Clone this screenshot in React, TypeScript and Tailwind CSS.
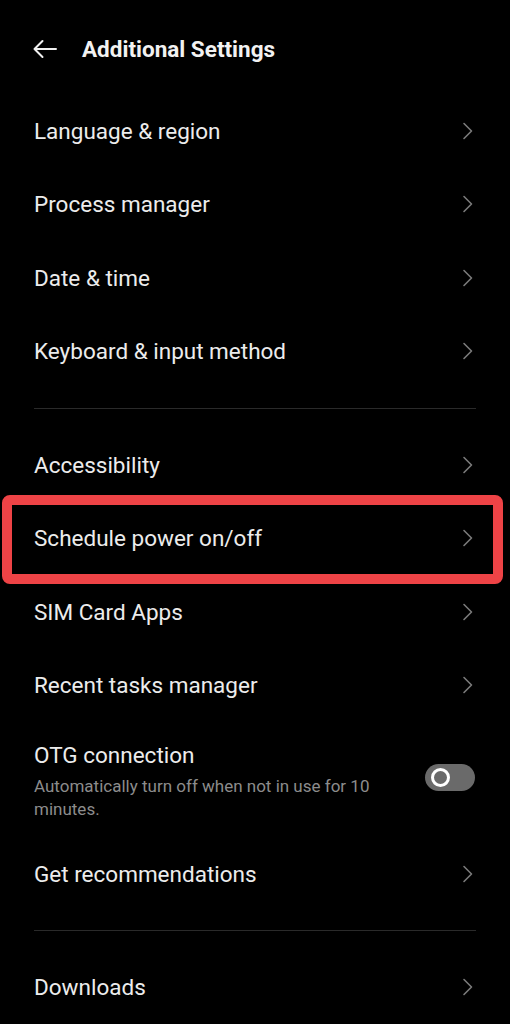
import React from "react";

const Chevron = () => (
  <svg width="14" height="18" viewBox="0 0 14 18" fill="none" className="shrink-0">
    <path d="M3 1.5 L10.5 9 L3 16.5" stroke="#7a7a7a" strokeWidth="1.6" strokeLinecap="round" strokeLinejoin="round" />
  </svg>
);

const Row = ({ label }: { label: string }) => (
  <div className="h-[73.5px] flex items-center justify-between pl-[34px] pr-[35px]">
    <span className="text-[22.5px] leading-[28px] text-[#ececec]">{label}</span>
    <Chevron />
  </div>
);

const Divider = ({ pad }: { pad: string }) => (
  <div className={`px-[34px] ${pad}`}>
    <div className="h-px bg-[#2a2a2a]" />
  </div>
);

export default function App() {
  return (
    <div className="w-[510px] h-[1024px] bg-black overflow-hidden relative" style={{ fontFamily: "Roboto, 'Noto Sans', sans-serif" }}>
      <div className="h-[94px] flex items-start pl-[32px] pt-[36px]">
        <div className="h-[26px] flex items-center">
          <svg width="26" height="20" viewBox="0 0 26 20" fill="none">
            <path d="M24 10 H2.5 M10.5 2 L2.5 10 L10.5 18" stroke="#f0f0f0" strokeWidth="2" strokeLinecap="round" strokeLinejoin="round" />
          </svg>
        </div>
        <span className="ml-[24px] text-[22.5px] leading-[26px] font-bold text-[#f2f2f2]">Additional Settings</span>
      </div>
      <Row label="Language & region" />
      <Row label="Process manager" />
      <Row label="Date & time" />
      <Row label="Keyboard & input method" />
      <Divider pad="py-[19.5px]" />
      <Row label="Accessibility" />
      <Row label="Schedule power on/off" />
      <Row label="SIM Card Apps" />
      <Row label="Recent tasks manager" />
      <div className="h-[115px] flex items-start justify-between pl-[34px] pr-[35px] pt-[19px]">
        <div className="flex flex-col">
          <span className="text-[22.5px] text-[#ececec] leading-[28px]">OTG connection</span>
          <span className="text-[17px] text-[#8c8c8c] leading-[23px] mt-[6px] w-[360px]">
            Automatically turn off when not in use for 10 minutes.
          </span>
        </div>
        <div className="mt-[23px] w-[50px] h-[27px] rounded-full bg-[#6a6a6a] flex items-center pl-[6px]">
          <div className="w-[19px] h-[19px] rounded-full border-[3px] border-white bg-[#6a6a6a]" />
        </div>
      </div>
      <Row label="Get recommendations" />
      <Divider pad="py-[19.5px]" />
      <Row label="Downloads" />
      <div className="absolute left-[2px] top-[495px] w-[501px] h-[89px] border-[10px] border-[#ee4346] rounded-[8px]" />
    </div>
  );
}
